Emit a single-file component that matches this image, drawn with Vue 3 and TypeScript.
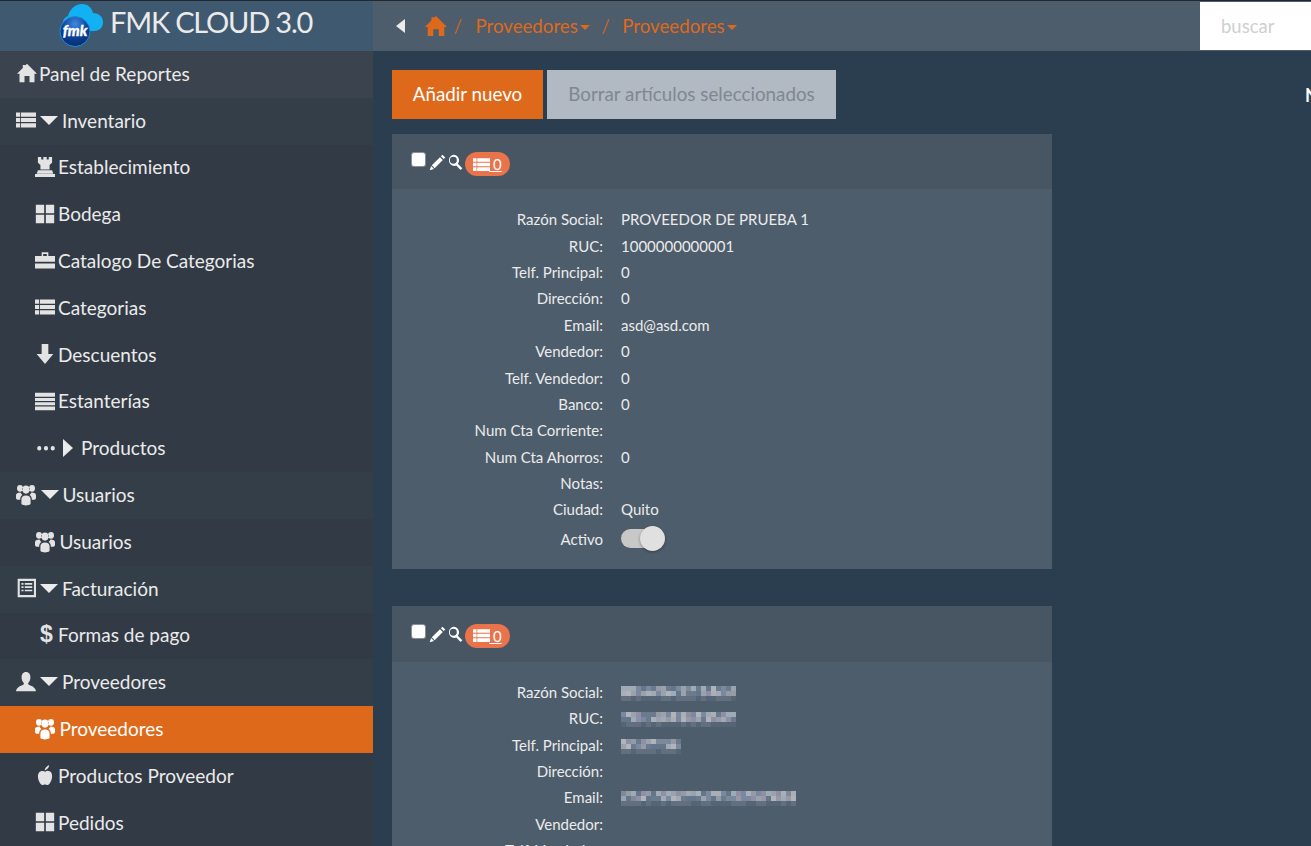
<script setup lang="ts">
const icons: Record<string, string> = {
  home: 'M12 1 L24 13 H21 V23 H15 V15.500 H9 V23 H3 V13 H0 L7 6 V2.500 H10 V3 Z',
  list: 'M0 3H5V8H0ZM6 3H24V8H6ZM0 9.500H5V14.500H0ZM6 9.500H24V14.500H6ZM0 16H5V21H0ZM6 16H24V21H6Z',
  rook: 'M3.500 0H7.500V3H10V0H14V3H16.500V0H20.500V7L17.500 9.500V15H6.500V9.500L3.500 7ZM3.500 16H20.500L22 20H2ZM0 20.500H24V24H0Z',
  th: 'M1 1H11V11H1ZM13 1H23V11H13ZM1 13H11V23H1ZM13 13H23V23H13Z',
  briefcase: 'M8 1.500H16V6H14.200V3.500H9.800V6H8ZM0 6H24V13H0ZM0 15H24V21H0Z',
  down: 'M8 0H16V12H22L12 24 2 12H8Z',
  stack: 'M0 2H24V7H0ZM0 8.500H24V12H0ZM0 13.500H24V17H0ZM0 18.500H24V23H0Z',
  group: 'M12 2.500a4.300 4.300 0 1 1 0 8.600 4.300 4.300 0 0 1 0-8.600ZM4.800 2a3.600 3.600 0 1 1 0 7.200 3.600 3.600 0 0 1 0-7.200ZM19.200 2a3.600 3.600 0 1 1 0 7.200 3.600 3.600 0 0 1 0-7.200ZM0 13c0-2 2-3 5.500-3 .6 1.200 1.300 2 2.200 2.600C6 13.500 5 15 5 17.500H2c-1.300 0-2-1-2-2ZM24 13c0-2-2-3-5.500-3-.6 1.200-1.300 2-2.200 2.600C18 13.500 19 15 19 17.500h3c1.300 0 2-1 2-2ZM6.500 17c0-2.300 2-4 5.500-4s5.500 1.700 5.500 4V22c-1.500 1-3.500 1.500-5.500 1.500S8 23 6.500 22Z',
  table: 'M2 1H24V23H2ZM4.500 3.500V20.500H21.500V3.500ZM6.500 6H9V8H6.500ZM10.500 6H19.500V8H10.500ZM6.500 10H9V12H6.500ZM10.500 10H19.500V12H10.500ZM6.500 14H9V16H6.500ZM10.500 14H19.500V16H10.500Z',
  user: 'M12 0c3.700 0 5.300 3 5.300 6.300 0 2.700-1 5.200-2.600 6.900-.5 1 0 2 2 2.800 3 1.200 6.300 2.700 7.300 7H0c1-4.300 4.300-5.800 7.300-7 2-.8 2.500-1.800 2-2.800C7.700 11.500 6.700 9 6.700 6.300 6.700 3 8.300 0 12 0Z',
  apple: 'M12.500 8C14 6.500 16 6.800 17.500 7.500c2.500 1 3 3.500 3 6 0 4.500-3 10.500-5.500 10.500-1.200 0-2-.7-3-.7s-1.800.7-3 .7c-2.500 0-5.500-6-5.500-10.500 0-2.500 1-5 3.500-6 1.500-.6 3.500-.5 5.500.5ZM11.500 6.500C12 3.500 14 1.500 17 0 17 3 15 5.500 11.500 6.500Z',
  pencil: 'M19 1l4 4-2.200 2.200-4-4ZM15.500 4.500l4 4L8 20l-4-4ZM3 17l4 4-6 2Z',
  search: 'M9.500 1a8.500 8.500 0 0 1 6.800 13.600L23 21.300 20.300 24 13.900 17.400A8.500 8.500 0 1 1 9.500 1ZM9.500 4.300a5.200 5.200 0 1 0 0 10.400 5.200 5.200 0 0 0 0-10.400Z',
  dots: 'M3 9.500a2.800 2.800 0 1 1 0 5.600 2.800 2.800 0 0 1 0-5.600ZM12 9.500a2.800 2.800 0 1 1 0 5.600 2.800 2.800 0 0 1 0-5.600ZM21 9.500a2.800 2.800 0 1 1 0 5.600 2.800 2.800 0 0 1 0-5.600Z',
};

interface NavItem { label: string; icon?: string; kind: 'top' | 'group' | 'child' | 'active' | 'sub'; glyph?: string }
const nav: NavItem[] = [
  { label: 'Panel de Reportes', icon: 'home', kind: 'top' },
  { label: 'Inventario', icon: 'list', kind: 'group' },
  { label: 'Establecimiento', icon: 'rook', kind: 'child' },
  { label: 'Bodega', icon: 'th', kind: 'child' },
  { label: 'Catalogo De Categorias', icon: 'briefcase', kind: 'child' },
  { label: 'Categorias', icon: 'list', kind: 'child' },
  { label: 'Descuentos', icon: 'down', kind: 'child' },
  { label: 'Estanterías', icon: 'stack', kind: 'child' },
  { label: 'Productos', icon: 'dots', kind: 'sub' },
  { label: 'Usuarios', icon: 'group', kind: 'group' },
  { label: 'Usuarios', icon: 'group', kind: 'child' },
  { label: 'Facturación', icon: 'table', kind: 'group' },
  { label: 'Formas de pago', kind: 'child', glyph: '$' },
  { label: 'Proveedores', icon: 'user', kind: 'group' },
  { label: 'Proveedores', icon: 'group', kind: 'active' },
  { label: 'Productos Proveedor', icon: 'apple', kind: 'child' },
  { label: 'Pedidos', icon: 'th', kind: 'child' },
];

const first = [
  ['Razón Social:', 'PROVEEDOR DE PRUEBA 1'],
  ['RUC:', '1000000000001'],
  ['Telf. Principal:', '0'],
  ['Dirección:', '0'],
  ['Email:', 'asd@asd.com'],
  ['Vendedor:', '0'],
  ['Telf. Vendedor:', '0'],
  ['Banco:', '0'],
  ['Num Cta Corriente:', ''],
  ['Num Cta Ahorros:', '0'],
  ['Notas:', ''],
  ['Ciudad:', 'Quito'],
];

function mosaic(cols: number, seed: number): string[] {
  const tones = ['#9aa3ad', '#7a88a0', '#a9afb6', '#7f8a99', '#b0b4ba', '#6a7b90', '#8f8fa6', '#a0aab4', '#64768c', '#959aa5'];
  const out: string[] = [];
  let s = seed;
  for (let i = 0; i < cols * 3; i++) {
    s = (s * 1103515245 + 12345) % 2147483648;
    const r = Math.floor(s / 65536) % 100;
    out.push(i >= cols * 2 ? (r % 2 ? '#626f7e' : '#566575') : tones[r % tones.length]);
  }
  return out;
}
const second = [
  { label: 'Razón Social:', cols: 23, seed: 3 },
  { label: 'RUC:', cols: 23, seed: 11 },
  { label: 'Telf. Principal:', cols: 12, seed: 7 },
  { label: 'Dirección:', cols: 0, seed: 0 },
  { label: 'Email:', cols: 35, seed: 23 },
  { label: 'Vendedor:', cols: 0, seed: 0 },
  { label: 'Telf. Vendedor:', cols: 0, seed: 0 },
].map((r) => ({ ...r, cells: mosaic(r.cols, r.seed) }));
</script>

<template>
  <div class="page">
    <aside class="sidebar">
      <div class="brand">
        <svg class="logo" viewBox="0 0 46 44" aria-hidden="true">
          <defs>
            <radialGradient id="ball" cx="50%" cy="25%" r="80%">
              <stop offset="0%" stop-color="#3f8be0" />
              <stop offset="55%" stop-color="#0b3f96" />
              <stop offset="100%" stop-color="#062a6c" />
            </radialGradient>
          </defs>
          <path fill="#12b2f2" d="M8 28C2 26 2 15 9 13 11 6 16 1 23 1c6 0 10 4 11 9 6 0 10 4 10 9 0 6-4 9-9 9H8Z" />
          <circle cx="16" cy="28.500" r="15" fill="url(#ball)" stroke="#1a8ce0" stroke-width="1" />
          <text x="16" y="33" text-anchor="middle" class="logo-text">fmk</text>
        </svg>
        <span class="brand-name">FMK CLOUD 3.0</span>
      </div>
      <nav class="nav">
        <a v-for="(item, i) in nav" :key="i" class="nav-item" :class="item.kind">
          <span v-if="item.glyph" class="dollar">{{ item.glyph }}</span>
          <svg v-else-if="item.icon" class="icon" :class="`i-${item.icon}`" viewBox="0 0 24 24" preserveAspectRatio="none"><path :d="icons[item.icon]" fill-rule="evenodd" /></svg>
          <span v-if="item.kind === 'group'" class="tri-down"></span>
          <span v-if="item.kind === 'sub'" class="tri-right"></span>
          <span class="nav-label">{{ item.label }}</span>
        </a>
      </nav>
    </aside>

    <div class="right">
      <header class="topbar">
        <span class="tri-left"></span>
        <svg class="crumb-home" viewBox="0 0 24 24"><path :d="icons.home" /></svg>
        <span class="sep first-sep">/</span>
        <span class="crumb">Proveedores<i class="caret"></i></span>
        <span class="sep">/</span>
        <span class="crumb">Proveedores<i class="caret"></i></span>
        <input class="search" placeholder="buscar" />
      </header>

      <main class="main">
        <div class="column">
          <div class="actions">
            <button class="btn primary">Añadir nuevo</button>
            <button class="btn muted">Borrar artículos seleccionados</button>
          </div>

          <section class="card">
            <div class="card-head">
              <input type="checkbox" class="check" />
              <svg class="mini" viewBox="0 0 24 24"><path :d="icons.pencil" /></svg>
              <svg class="mini lens" viewBox="0 0 24 24"><path :d="icons.search" fill-rule="evenodd" /></svg>
              <span class="badge"><svg viewBox="0 0 24 24"><path :d="icons.list" /></svg><u>&nbsp;0</u></span>
            </div>
            <div class="card-body">
              <div v-for="row in first" :key="row[0]" class="row">
                <span class="k">{{ row[0] }}</span>
                <span class="v">{{ row[1] }}</span>
              </div>
              <div class="row toggle-row">
                <span class="k">Activo</span>
                <span class="toggle"><i></i></span>
              </div>
            </div>
          </section>

          <section class="card second">
            <div class="card-head">
              <input type="checkbox" class="check" />
              <svg class="mini" viewBox="0 0 24 24"><path :d="icons.pencil" /></svg>
              <svg class="mini lens" viewBox="0 0 24 24"><path :d="icons.search" fill-rule="evenodd" /></svg>
              <span class="badge"><svg viewBox="0 0 24 24"><path :d="icons.list" /></svg><u>&nbsp;0</u></span>
            </div>
            <div class="card-body">
              <div v-for="row in second" :key="row.label" class="row">
                <span class="k">{{ row.label }}</span>
                <span class="v">
                  <span v-if="row.cols" class="blur" :style="{ gridTemplateColumns: `repeat(${row.cols}, 5px)` }">
                    <i v-for="(c, j) in row.cells" :key="j" :style="{ background: c }"></i>
                  </span>
                </span>
              </div>
            </div>
          </section>
        </div>
        <div class="side-note">N</div>
      </main>
    </div>
  </div>
</template>

<style>
html, body { margin: 0; height: 100%; overflow: hidden; background: #2b3e50; }
</style>

<style scoped>
.page {
  display: flex;
  width: 1311px;
  height: 846px;
  overflow: hidden;
  font-family: Lato, "Liberation Sans", sans-serif;
  color: #ebebeb;
  border-top: 1px solid #23272e;
  box-sizing: border-box;
}
.sidebar { width: 373px; flex: none; background: #323a45; display: flex; flex-direction: column; }
.brand {
  height: 50px;
  flex: none;
  background: #3f5970;
  display: flex;
  align-items: flex-start;
  padding-left: 59px;
  gap: 5px;
}
.logo { width: 46px; height: 44px; margin-top: 2px; }
.logo-text { font: italic 900 15px Lato, sans-serif; fill: #fff; stroke: #fff; stroke-width: .3px; }
.brand-name { font-size: 29px; line-height: 42px; color: #ebebeb; letter-spacing: -1.2px; white-space: nowrap; }
.nav-item {
  height: 46.8px;
  display: flex;
  align-items: center;
  font-size: 19px;
  color: #ebebeb;
  box-sizing: border-box;
  padding-bottom: 2px;
}
.nav-item.top { background: #3b444e; padding-left: 17px; }
.nav-item.group { background: #343e48; padding-left: 16px; }
.nav-item.child, .nav-item.active, .nav-item.sub { padding-left: 35px; }
.nav-item.active { background: #df691a; color: #fff; }
.nav-label { white-space: nowrap; }
.icon { width: 20px; height: 20px; fill: #e3e3e3; flex: none; margin-right: 3px; }
.active .icon { fill: #fff; }
.top .icon { margin-right: 2px; }
.group .icon { margin-right: 4px; }
.icon.i-group { height: 23px; margin-right: 4.500px; }
.sub .icon { width: 18px; margin: 0 0 0 2px; }
.tri-down {
  width: 0; height: 0; margin-right: 4px; flex: none;
  border-left: 9px solid transparent;
  border-right: 9px solid transparent;
  border-top: 9px solid #ebebeb;
}
.tri-right {
  width: 0; height: 0; margin: 0 8px 0 8px; flex: none;
  border-top: 9px solid transparent;
  border-bottom: 9px solid transparent;
  border-left: 10px solid #ebebeb;
}
.dollar { width: 23px; text-align: center; font-size: 23px; font-weight: 700; color: #e3e3e3; font-family: "Liberation Sans", sans-serif; }

.right { flex: 1; min-width: 0; display: flex; flex-direction: column; }
.topbar {
  height: 50px;
  flex: none;
  background: #4e5d6c;
  display: flex;
  align-items: center;
  font-size: 18.700px;
  padding-left: 23px;
  position: relative;
}
.tri-left {
  width: 0; height: 0;
  border-top: 7.500px solid transparent;
  border-bottom: 7.500px solid transparent;
  border-right: 9px solid #ebebeb;
}
.crumb-home { width: 22px; height: 22px; fill: #df691a; margin-left: 20px; }
.sep { color: #df691a; margin: 0 12px 0 12px; opacity: .85; }
.first-sep { margin: 0 13px 0 7px; }
.crumb { color: #df691a; white-space: nowrap; padding-bottom: 1px; }
.caret {
  display: inline-block;
  width: 0; height: 0;
  margin-left: 2px;
  vertical-align: middle;
  border-left: 5.500px solid transparent;
  border-right: 5.500px solid transparent;
  border-top: 5px solid #df691a;
}
.search {
  position: absolute;
  right: 0;
  top: 1px;
  width: 111px;
  height: 48px;
  box-sizing: border-box;
  border: 0;
  padding: 0 0 0 21px;
  background: #fff;
  font: 18.500px Lato, sans-serif;
  outline: none;
}
.search::placeholder { color: #cfcfcf; opacity: 1; }

.main { flex: 1; min-height: 0; background: #2b3e50; display: flex; padding: 19px 0 0 19px; overflow: hidden; }
.column { width: 660px; flex: none; }
.side-note { margin-left: 253px; margin-top: 14px; font-size: 18px; font-weight: 700; color: #fff; width: 6px; overflow: hidden; line-height: 22px; }
.actions { display: flex; gap: 4px; }
.btn {
  height: 49px;
  border: 0;
  font: 18.800px Lato, sans-serif;
  padding: 0 0 3px;
}
.primary { width: 151px; background: #df691a; color: #fff; }
.muted { width: 289px; background: #b1b9c2; color: #808791; }
.card { margin-top: 15px; background: #4e5d6c; }
.card.second { margin-top: 37px; }
.card-head {
  height: 55px;
  box-sizing: border-box;
  background: #485563;
  display: flex;
  align-items: flex-start;
  padding: 18px 0 0 19px;
}
.second .card-head { height: 56px; }
.check {
  appearance: none;
  width: 15px; height: 15px;
  box-sizing: border-box;
  margin: 0 3px 0 0;
  background: #fff;
  border: 1.500px solid #8a8f96;
  border-radius: 3px;
  flex: none;
}
.mini { width: 17px; height: 17px; fill: #fff; margin: 2px 1px 0 0; flex: none; }
.lens { width: 16px; height: 16px; margin: 2px 2px 0 0; }
.badge {
  height: 24px;
  width: 45px;
  box-sizing: border-box;
  border-radius: 12px;
  background: #e9734a;
  display: flex;
  align-items: center;
  justify-content: center;
  font-size: 15px;
  color: #fff;
}
.badge svg { width: 17px; height: 17px; fill: #fff; }
.badge u { margin-left: -1px; }
.card-body { padding: 17px 0 14px 0; }
.row {
  display: flex;
  height: 26.400px;
  align-items: center;
  font-size: 15px;
  color: #ebebeb;
}
.k { width: 211px; text-align: right; flex: none; white-space: nowrap; }
.v { margin-left: 18px; white-space: nowrap; }
.toggle-row { height: 32px; }
.toggle { margin-left: 18px; position: relative; width: 39px; height: 19px; border-radius: 10px; background: #c8c8c8; display: block; }
.toggle i {
  position: absolute;
  right: -5px;
  top: -3px;
  width: 25px;
  height: 25px;
  border-radius: 50%;
  background: #e0e0e0;
  box-shadow: 0 1px 3px rgba(0,0,0,.35);
}
.blur { display: grid; grid-auto-rows: 5px; filter: blur(.7px); margin-top: 3px; }
.blur i { display: block; width: 5px; height: 5px; }
</style>
